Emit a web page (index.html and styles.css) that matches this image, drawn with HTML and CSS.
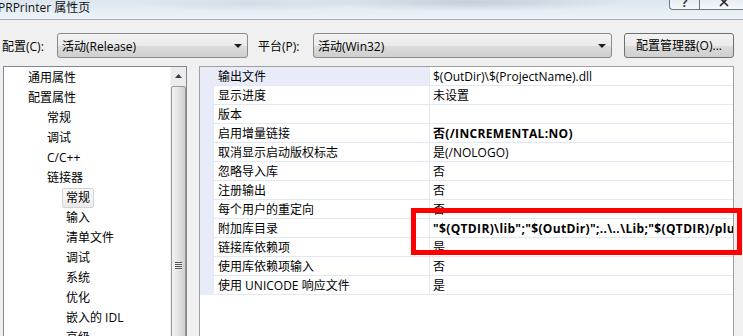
FILE: index.html
```html
<html>

<head>
    <title>PRPrinter 属性页</title>
    <link rel="stylesheet" href="styles.css">
</head>

<body>
    <div class="titlebar">
        <span class="title">PRPrinter 属性页</span>
        <div class="winbtns">
            <span class="wb help">?</span>
            <span class="wb close">
                <svg width="14" height="10" viewBox="0 0 14 10">
                    <path d="M3 -2 L7 2 L11 -2 M7 2 L3 6 M7 2 L11 6" stroke="#222" stroke-width="1.6" fill="none" />
                </svg>
            </span>
        </div>
    </div>

    <div class="toolbar">
        <span class="lbl">配置(C):</span>
        <div class="combo cfg"><span>活动(Release)</span><span class="arrow"></span></div>
        <span class="lbl plat-lbl">平台(P):</span>
        <div class="combo plat"><span>活动(Win32)</span><span class="arrow"></span></div>
        <div class="btn">配置管理器(O)...</div>
    </div>

    <div class="main">
        <div class="tree">
            <ul class="items">
                <li class="l1">通用属性</li>
                <li class="l1">配置属性</li>
                <li class="l2">常规</li>
                <li class="l2">调试</li>
                <li class="l2">C/C++</li>
                <li class="l2">链接器</li>
                <li class="l3"><span class="sel">常规</span></li>
                <li class="l3">输入</li>
                <li class="l3">清单文件</li>
                <li class="l3">调试</li>
                <li class="l3">系统</li>
                <li class="l3">优化</li>
                <li class="l3">嵌入的 IDL</li>
                <li class="l3">高级</li>
            </ul>
            <div class="vscroll">
                <div class="up">
                    <svg width="7" height="4" viewBox="0 0 7 4"><path d="M0 4 L3.5 0 L7 4 Z" fill="#3c3c3c" /></svg>
                </div>
                <div class="thumb"><span class="grip"></span></div>
            </div>
        </div>

        <div class="grid">
            <div class="row first"><span class="m"></span><span class="name">输出文件</span><span class="val">$(OutDir)\$(ProjectName).dll</span></div>
            <div class="row"><span class="m"></span><span class="name">显示进度</span><span class="val">未设置</span></div>
            <div class="row"><span class="m"></span><span class="name">版本</span><span class="val"></span></div>
            <div class="row"><span class="m"></span><span class="name">启用增量链接</span><span class="val bold">否(/INCREMENTAL:NO)</span></div>
            <div class="row"><span class="m"></span><span class="name">取消显示启动版权标志</span><span class="val">是(/NOLOGO)</span></div>
            <div class="row"><span class="m"></span><span class="name">忽略导入库</span><span class="val">否</span></div>
            <div class="row"><span class="m"></span><span class="name">注册输出</span><span class="val">否</span></div>
            <div class="row"><span class="m"></span><span class="name">每个用户的重定向</span><span class="val">否</span></div>
            <div class="row"><span class="m"></span><span class="name">附加库目录</span><span class="val bold">"$(QTDIR)\lib";"$(OutDir)";..\..\Lib;"$(QTDIR)/plugins/designer";%(AdditionalLibraryDirectories)</span></div>
            <div class="row"><span class="m"></span><span class="name">链接库依赖项</span><span class="val">是</span></div>
            <div class="row"><span class="m"></span><span class="name">使用库依赖项输入</span><span class="val">否</span></div>
            <div class="row"><span class="m"></span><span class="name">使用 UNICODE 响应文件</span><span class="val">是</span></div>
        </div>
    </div>

    <!-- red highlight drawn over the grid -->
    <div class="callout"></div>
</body>

</html>
```

FILE: styles.css
```css
* {
    box-sizing: border-box;
}

body {
    margin: 0px;
    width: 743px;
    height: 336px;
    overflow: hidden;
    background-color: #f0f0f0;
    font-family: "Open Sans", "Noto Sans CJK SC", sans-serif;
    font-size: 12px;
    color: #000;
}

.titlebar {
    height: 20px;
    display: flex;
    justify-content: space-between;
    align-items: flex-start;
    border-bottom: 1px solid #a7adb4;
    background: radial-gradient(ellipse 160px 9px at 470px 2px, #c3cfdb, transparent),
        radial-gradient(ellipse 120px 8px at 250px 3px, #d3dde7, transparent),
        linear-gradient(to bottom, #dce6ef, #eef4f8);
}

.title {
    margin-left: -2px;
    line-height: 15px;
    font-size: 12px;
    color: #111;
}

.winbtns {
    display: flex;
    margin-right: -6px;
}

.wb {
    height: 10px;
    overflow: hidden;
    border: 1px solid #707880;
    border-top: none;
    background: linear-gradient(to bottom, #e6edf4, #f6f9fb);
    display: flex;
    justify-content: center;
}

.help {
    width: 30px;
    border-bottom-left-radius: 4px;
    border-right: none;
    font-size: 12px;
    line-height: 6px;
    font-weight: bold;
    color: #333;
}

.close {
    width: 50px;
}

.toolbar {
    display: flex;
    align-items: center;
    height: 25px;
    margin: 13px 0 8px 0;
    padding-left: 2px;
}

.lbl {
    width: 55px;
}

.plat-lbl {
    margin-left: 10px;
}

.combo {
    height: 25px;
    display: flex;
    align-items: center;
    justify-content: space-between;
    padding: 0 5px 0 4px;
    border: 1px solid #8b8b8b;
    border-radius: 3px;
    background: linear-gradient(to bottom, #f3f3f3 0%, #ebebeb 50%, #dddddd 51%, #cfcfcf 100%);
}

.cfg {
    width: 191px;
}

.plat {
    width: 299px;
}

.arrow {
    width: 0;
    height: 0;
    border-left: 4px solid transparent;
    border-right: 4px solid transparent;
    border-top: 4px solid #1e1e1e;
}

.btn {
    width: 110px;
    height: 25px;
    margin-left: 12px;
    border: 1px solid #707070;
    border-radius: 3px;
    background: linear-gradient(to bottom, #f2f2f2 0%, #ebebeb 50%, #dddddd 51%, #cfcfcf 100%);
    text-align: center;
    line-height: 23px;
}

.main {
    display: flex;
    height: 280px;
}

.tree {
    width: 184px;
    margin-left: 3px;
    display: flex;
    border: 1px solid #828790;
    background-color: white;
    overflow: hidden;
}

.items {
    flex: 1;
    list-style: none;
    margin: 0;
    padding: 1px 0 0 0;
}

.items li {
    height: 20px;
    line-height: 20px;
    white-space: nowrap;
}

.l1 {
    padding-left: 24px;
}

.l2 {
    padding-left: 43px;
}

.l3 {
    padding-left: 62px;
}

.sel {
    display: inline-block;
    height: 20px;
    line-height: 18px;
    margin-left: -4px;
    padding: 0 3px;
    border: 1px solid #d4d4d4;
    border-radius: 2px;
    background: linear-gradient(to bottom, #fafafa, #ebebeb);
}

.vscroll {
    width: 16px;
    display: flex;
    flex-direction: column;
    background-color: #ececec;
    border-left: 1px solid #f4f4f4;
}

.up {
    height: 19px;
    display: flex;
    justify-content: center;
    padding-top: 7px;
}

.thumb {
    flex: 1;
    border: 1px solid #979797;
    border-radius: 2px;
    background: linear-gradient(to right, #f4f4f4 0%, #e4e4e4 45%, #cfcfcf 100%);
    padding-top: 175px;
    display: flex;
    justify-content: center;
}

.grip {
    width: 7px;
    height: 8px;
    background: repeating-linear-gradient(to bottom, #555 0px, #555 1px, #eee 1px, #eee 2px);
}

.grid {
    width: 535px;
    margin-left: 12px;
    border: 1px solid #a0a0a0;
    border-bottom: none;
    background-color: white;
    position: relative;
}

.grid::before {
    content: "";
    position: absolute;
    left: 0;
    top: 0;
    width: 14px;
    height: 228px;
    background-color: #e8ecf8;
}

.row {
    display: flex;
    height: 19px;
    line-height: 19px;
}

.m {
    width: 14px;
}

.name {
    width: 216px;
    padding-left: 4px;
    border-bottom: 1px solid #e2e7f4;
    border-right: 1px solid #e2e7f4;
    white-space: nowrap;
}

.first .name {
    background-color: #e8ecf8;
}

.val {
    flex: 1;
    padding-left: 3px;
    border-bottom: 1px solid #e2e7f4;
    white-space: nowrap;
    overflow: hidden;
}

.bold {
    font-weight: bold;
    letter-spacing: 0.35px;
}

.callout {
    position: absolute;
    left: 411px;
    top: 208px;
    width: 331px;
    height: 47px;
    border: 5px solid #ff0000;
}
```
